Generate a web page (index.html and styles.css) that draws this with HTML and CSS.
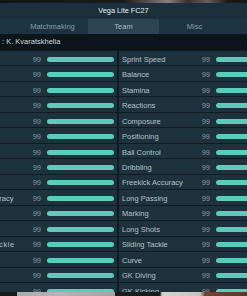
FILE: index.html
```html
<!DOCTYPE html>
<html>
<head>
<meta charset="utf-8">
<link rel="stylesheet" href="styles.css">
</head>
<body>
<div class="backdrop-top"></div>
<div class="panel">
  <div class="title">Vega Lite FC27</div>
  <div class="tabs">
    <div class="tab">Matchmaking</div>
    <div class="tab active">Team</div>
    <div class="tab">Misc</div>
  </div>
  <div class="player">: K. Kvaratskhelia</div>
  <div class="grid">
    <div class="col">
      <div class="row"><span class="label">Acceleration</span><span class="num">99</span><span class="bar"></span></div>
      <div class="row"><span class="label">Agility</span><span class="num">99</span><span class="bar"></span></div>
      <div class="row"><span class="label">Jumping</span><span class="num">99</span><span class="bar"></span></div>
      <div class="row"><span class="label">Strength</span><span class="num">99</span><span class="bar"></span></div>
      <div class="row"><span class="label">Aggression</span><span class="num">99</span><span class="bar"></span></div>
      <div class="row"><span class="label">Vision</span><span class="num">99</span><span class="bar"></span></div>
      <div class="row"><span class="label">Finishing</span><span class="num">99</span><span class="bar"></span></div>
      <div class="row"><span class="label">Crossing</span><span class="num">99</span><span class="bar"></span></div>
      <div class="row"><span class="label">Volleys</span><span class="num">99</span><span class="bar"></span></div>
      <div class="row"><span class="label">Heading Accuracy</span><span class="num">99</span><span class="bar"></span></div>
      <div class="row"><span class="label">Interceptions</span><span class="num">99</span><span class="bar"></span></div>
      <div class="row"><span class="label">Penalties</span><span class="num">99</span><span class="bar"></span></div>
      <div class="row"><span class="label wide">Standing Tackle</span><span class="num">99</span><span class="bar"></span></div>
      <div class="row"><span class="label">Short Passing</span><span class="num">99</span><span class="bar"></span></div>
      <div class="row"><span class="label">GK Handling</span><span class="num">99</span><span class="bar"></span></div>
      <div class="row"><span class="label">GK Reflexes</span><span class="num">99</span><span class="bar"></span></div>
    </div>
    <div class="col">
      <div class="row"><span class="label">Sprint Speed</span><span class="num">99</span><span class="bar"></span></div>
      <div class="row"><span class="label">Balance</span><span class="num">99</span><span class="bar"></span></div>
      <div class="row"><span class="label">Stamina</span><span class="num">99</span><span class="bar"></span></div>
      <div class="row"><span class="label">Reactions</span><span class="num">99</span><span class="bar"></span></div>
      <div class="row"><span class="label">Composure</span><span class="num">99</span><span class="bar"></span></div>
      <div class="row"><span class="label">Positioning</span><span class="num">99</span><span class="bar"></span></div>
      <div class="row"><span class="label">Ball Control</span><span class="num">99</span><span class="bar"></span></div>
      <div class="row"><span class="label">Dribbling</span><span class="num">99</span><span class="bar"></span></div>
      <div class="row"><span class="label">Freekick Accuracy</span><span class="num">99</span><span class="bar"></span></div>
      <div class="row"><span class="label">Long Passing</span><span class="num">99</span><span class="bar"></span></div>
      <div class="row"><span class="label">Marking</span><span class="num">99</span><span class="bar"></span></div>
      <div class="row"><span class="label">Long Shots</span><span class="num">99</span><span class="bar"></span></div>
      <div class="row"><span class="label">Sliding Tackle</span><span class="num">99</span><span class="bar"></span></div>
      <div class="row"><span class="label">Curve</span><span class="num">99</span><span class="bar"></span></div>
      <div class="row"><span class="label">GK Diving</span><span class="num">99</span><span class="bar"></span></div>
      <div class="row"><span class="label">GK Kicking</span><span class="num">99</span><span class="bar"></span></div>
    </div>
  </div>
</div>
<div class="backdrop-bottom"></div>
</body>
</html>
```

FILE: styles.css
```css
html, body {
  margin: 0;
  padding: 0;
}
body {
  width: 247px;
  height: 296px;
  overflow: hidden;
  background: #161616;
  font-family: "Liberation Sans", Arial, sans-serif;
  font-size: 7.5px;
}
.backdrop-top {
  height: 3px;
  background: linear-gradient(90deg, #141414 0%, #1c1c1c 50%, #5b4f52 60%, #8a7f80 68%, #3a3032 76%, #6a5e5e 84%, #1e1a1a 92%, #141414 100%);
}
.panel {
  height: 289px;
  overflow: hidden;
  background: #1d323d;
}
.title {
  height: 16px;
  line-height: 16px;
  text-align: center;
  color: #e6eef2;
  background: #1b303b;
  font-size: 7.3px;
}
.tabs {
  height: 15px;
  display: flex;
  justify-content: center;
  background: #1b343f;
}
.tab {
  width: 71px;
  line-height: 15px;
  text-align: center;
  color: #8b9ea8;
}
.tab.active {
  background: #2b4551;
  color: #a6b9c2;
}
.player {
  height: 16px;
  line-height: 15px;
  padding-left: 2px;
  background: #0c1519;
  color: #cfd8dc;
}
.grid {
  display: flex;
  margin-left: -50px;
  width: 340px;
}
.col {
  width: 167px;
  flex: none;
  border-right: 2px solid #101b21;
}
.row {
  height: 15.47px;
  box-sizing: border-box;
  border-top: 1px solid #0f1c23;
  display: flex;
  align-items: center;
  padding: 2px 3px 0 3px;
  background: #1d323d;
}
.label {
  flex: 1;
  min-width: 0;
  white-space: nowrap;
  color: #b3c1c9;
}
.label.wide {
  letter-spacing: 0.6px;
}
.num {
  width: 12px;
  text-align: right;
  color: #8697a1;
}
.bar {
  width: 67px;
  height: 5px;
  margin-left: 6px;
  border-radius: 3px;
  background: #5ccbb9;
}
.backdrop-bottom {
  height: 4px;
  background: linear-gradient(90deg, #1a1a1a 0px, #1a1a1a 17px, #a9a9a9 17px, #b5b5b5 60px, #a2a2a2 115px, #1c1c1c 115px, #1c1c1c 160px, #d6d2ce 162px, #c8c2bc 200px, #6d4531 205px, #5a3828 247px);
}
```
